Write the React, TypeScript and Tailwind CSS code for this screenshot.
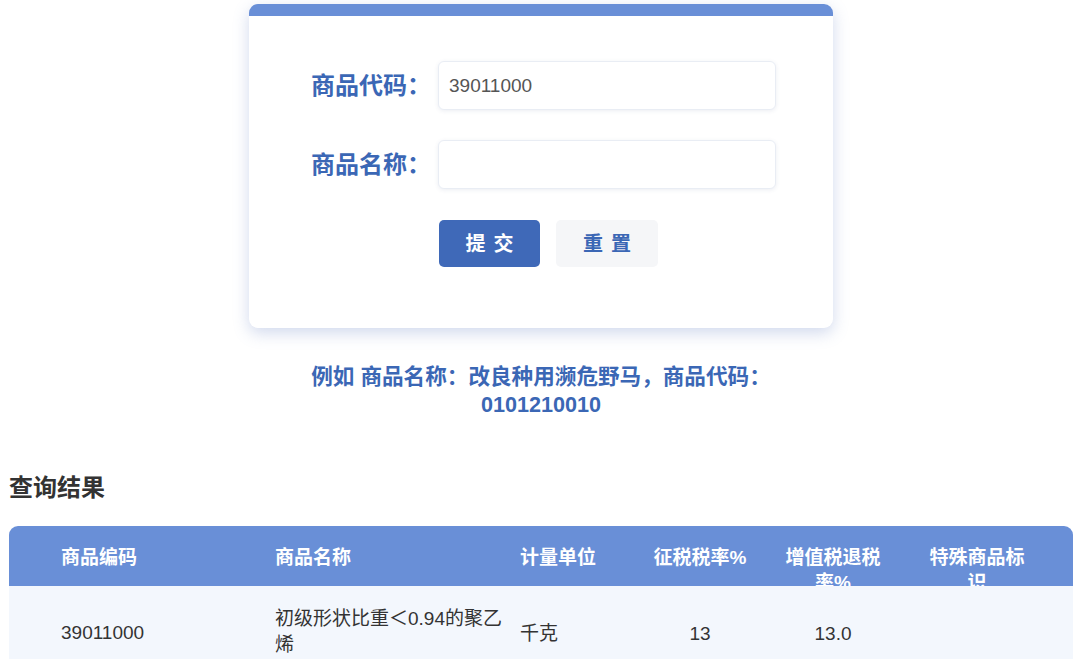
import React from "react";

const font = { fontFamily: '"Liberation Sans", "Noto Sans CJK SC", sans-serif' };

export default function App() {
  return (
    <div className="w-[1080px] min-h-[659px] bg-white" style={font}>
      {/* Card */}
      <div className="pt-[4px] flex justify-center">
        <div className="w-[584px] ml-[2px] rounded-[9px] bg-white overflow-hidden shadow-[0_5px_16px_rgba(90,120,190,0.28)]">
          <div className="h-[12px] bg-[#698fd7]" />
          <div className="pt-[45px] pb-[61px] pl-[62px]">
            <div className="flex items-center h-[49px]">
              <div className="w-[120px] text-right text-[24px] font-bold text-[#3b67b5] leading-none">商品代码：</div>
              <div className="ml-[7px] w-[338px] h-[49px] rounded-[6px] bg-white border border-[#e9edf4] shadow-[0_1px_4px_rgba(60,80,130,0.10)] flex items-center pl-[10px] pt-[2px] text-[19px] text-[#555]">
                39011000
              </div>
            </div>
            <div className="flex items-center h-[49px] mt-[30px]">
              <div className="w-[120px] text-right text-[24px] font-bold text-[#3b67b5] leading-none">商品名称：</div>
              <div className="ml-[7px] w-[338px] h-[49px] rounded-[6px] bg-white border border-[#e9edf4] shadow-[0_1px_4px_rgba(60,80,130,0.10)]" />
            </div>
            <div className="flex mt-[31px] ml-[128px] gap-[16px]">
              <div className="w-[101px] h-[47px] rounded-[5px] bg-[#3f69b8] text-white text-[20px] font-bold flex items-center justify-center tracking-[8px] pl-[8px]">
                提交
              </div>
              <div className="w-[102px] h-[47px] rounded-[5px] bg-[#f5f6f8] text-[#3b67b5] text-[20px] font-bold flex items-center justify-center tracking-[8px] pl-[8px]">
                重置
              </div>
            </div>
          </div>
        </div>
      </div>

      {/* Example */}
      <div className="flex justify-center mt-[35px]">
        <div className="w-[540px] ml-[2px] text-center text-[21.6px] leading-[28px] font-bold text-[#3b67b5]">
          例如 商品名称：改良种用濒危野马，商品代码：0101210010
        </div>
      </div>

      {/* Results heading */}
      <div className="mt-[53px] pl-[9px] text-[24px] leading-[32px] font-bold text-[#333]">查询结果</div>

      {/* Table */}
      <div className="mt-[22px] ml-[9px] w-[1064px]">
        <div className="grid grid-cols-[256px_245px_129px_122px_144px_144px_1fr] h-[60px] overflow-hidden rounded-t-[9px] bg-[#698fd7] text-white text-[19px] font-bold leading-[25px]">
          <div className="pt-[19px] pl-[52px]">商品编码</div>
          <div className="pt-[19px] pl-[10px]">商品名称</div>
          <div className="pt-[19px] pl-[10px]">计量单位</div>
          <div className="pt-[19px] text-center">征税税率%</div>
          <div className="pt-[19px] px-[20px] text-center">增值税退税率%</div>
          <div className="pt-[19px] px-[20px] text-center">特殊商品标识</div>
          <div />
        </div>
        <div className="grid grid-cols-[256px_245px_129px_122px_144px_144px_1fr] items-center pt-[20px] pb-[18px] bg-[#f3f7fd] text-[#333] text-[19px] leading-[26px]">
          <div className="pl-[52px] pt-[2px]">39011000</div>
          <div className="pl-[10px]">初级形状比重＜0.94的聚乙烯</div>
          <div className="pl-[10px] pt-[4px]">千克</div>
          <div className="text-center pt-[4px]">13</div>
          <div className="text-center pt-[4px]">13.0</div>
          <div />
          <div />
        </div>
      </div>
    </div>
  );
}
